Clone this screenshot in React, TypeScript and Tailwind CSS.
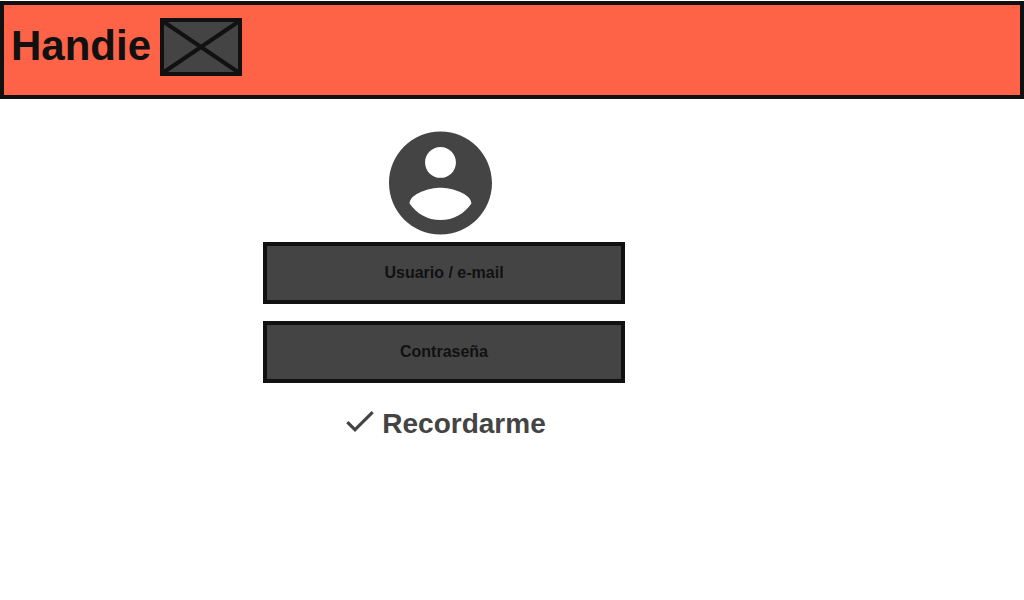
import { useState } from "react";

function Envelope() {
  return (
    <svg
      className="h-[58px] w-[82px] shrink-0"
      viewBox="0 0 82 58"
      fill="none"
      stroke="#111111"
      aria-hidden="true"
    >
      <path d="M4 4 78 54M78 4 4 54" strokeWidth="4" />
      <rect x="2" y="2" width="78" height="54" strokeWidth="4" />
    </svg>
  );
}

function Avatar() {
  return (
    <svg
      className="mr-[7px] h-[104px] w-[103px] text-[#444444]"
      viewBox="2 2 20 20"
      fill="currentColor"
      aria-hidden="true"
    >
      <path d="M12 2C6.48 2 2 6.48 2 12s4.48 10 10 10 10-4.48 10-10S17.52 2 12 2zm0 3c1.66 0 3 1.34 3 3s-1.34 3-3 3-3-1.34-3-3 1.34-3 3-3zm0 14.2c-2.5 0-4.71-1.28-6-3.22.03-1.99 4-3.08 6-3.08s5.97 1.09 6 3.08c-1.29 1.94-3.5 3.22-6 3.22z" />
    </svg>
  );
}

function Field({ label, type, name }: { label: string; type: string; name: string }) {
  return (
    <input
      type={type}
      name={name}
      aria-label={label}
      placeholder={label}
      className="w-full border-4 border-[#111111] bg-[#444444] px-4 py-[15px] text-center text-base font-bold text-[#111111] outline-none placeholder:text-[#111111] placeholder:opacity-100"
    />
  );
}

export default function App() {
  const [remember, setRemember] = useState(true);

  return (
    <div className="min-h-screen bg-white pt-px font-['Liberation_Sans',Arial,sans-serif]">
      <header className="flex items-start gap-[9px] border-4 border-[#111111] bg-[#ff6347] px-[7px] pt-[13px] pb-[19px]">
        <h1 className="text-[42px] leading-[56px] font-bold text-[#111111]">Handie</h1>
        <div className="bg-[#444444]">
          <Envelope />
        </div>
      </header>

      <main className="max-w-[888px] pt-8">
        <form
          className="mx-auto flex w-full max-w-[362px] flex-col items-center"
          onSubmit={(event) => event.preventDefault()}
        >
          <Avatar />
          <div className="mt-[7px] flex w-full flex-col gap-[17px]">
            <Field label="Usuario / e-mail" type="text" name="user" />
            <Field label="Contraseña" type="password" name="password" />
          </div>
          <label className="mt-6 ml-1 flex items-start gap-2 text-[28px] leading-[34px] font-bold text-[#444444]">
            <span className="grid pt-1">
              <input
                type="checkbox"
                checked={remember}
                onChange={(event) => setRemember(event.target.checked)}
                className="peer col-start-1 row-start-1 h-[21px] w-7 appearance-none"
              />
              <svg
                className="pointer-events-none invisible col-start-1 row-start-1 h-[21px] w-7 peer-checked:visible"
                viewBox="3.41 5.59 17.59 13.41"
                fill="currentColor"
                aria-hidden="true"
              >
                <path d="M9 16.17 4.83 12l-1.42 1.41L9 19 21 7l-1.41-1.41z" />
              </svg>
            </span>
            Recordarme
          </label>
        </form>
      </main>
    </div>
  );
}
